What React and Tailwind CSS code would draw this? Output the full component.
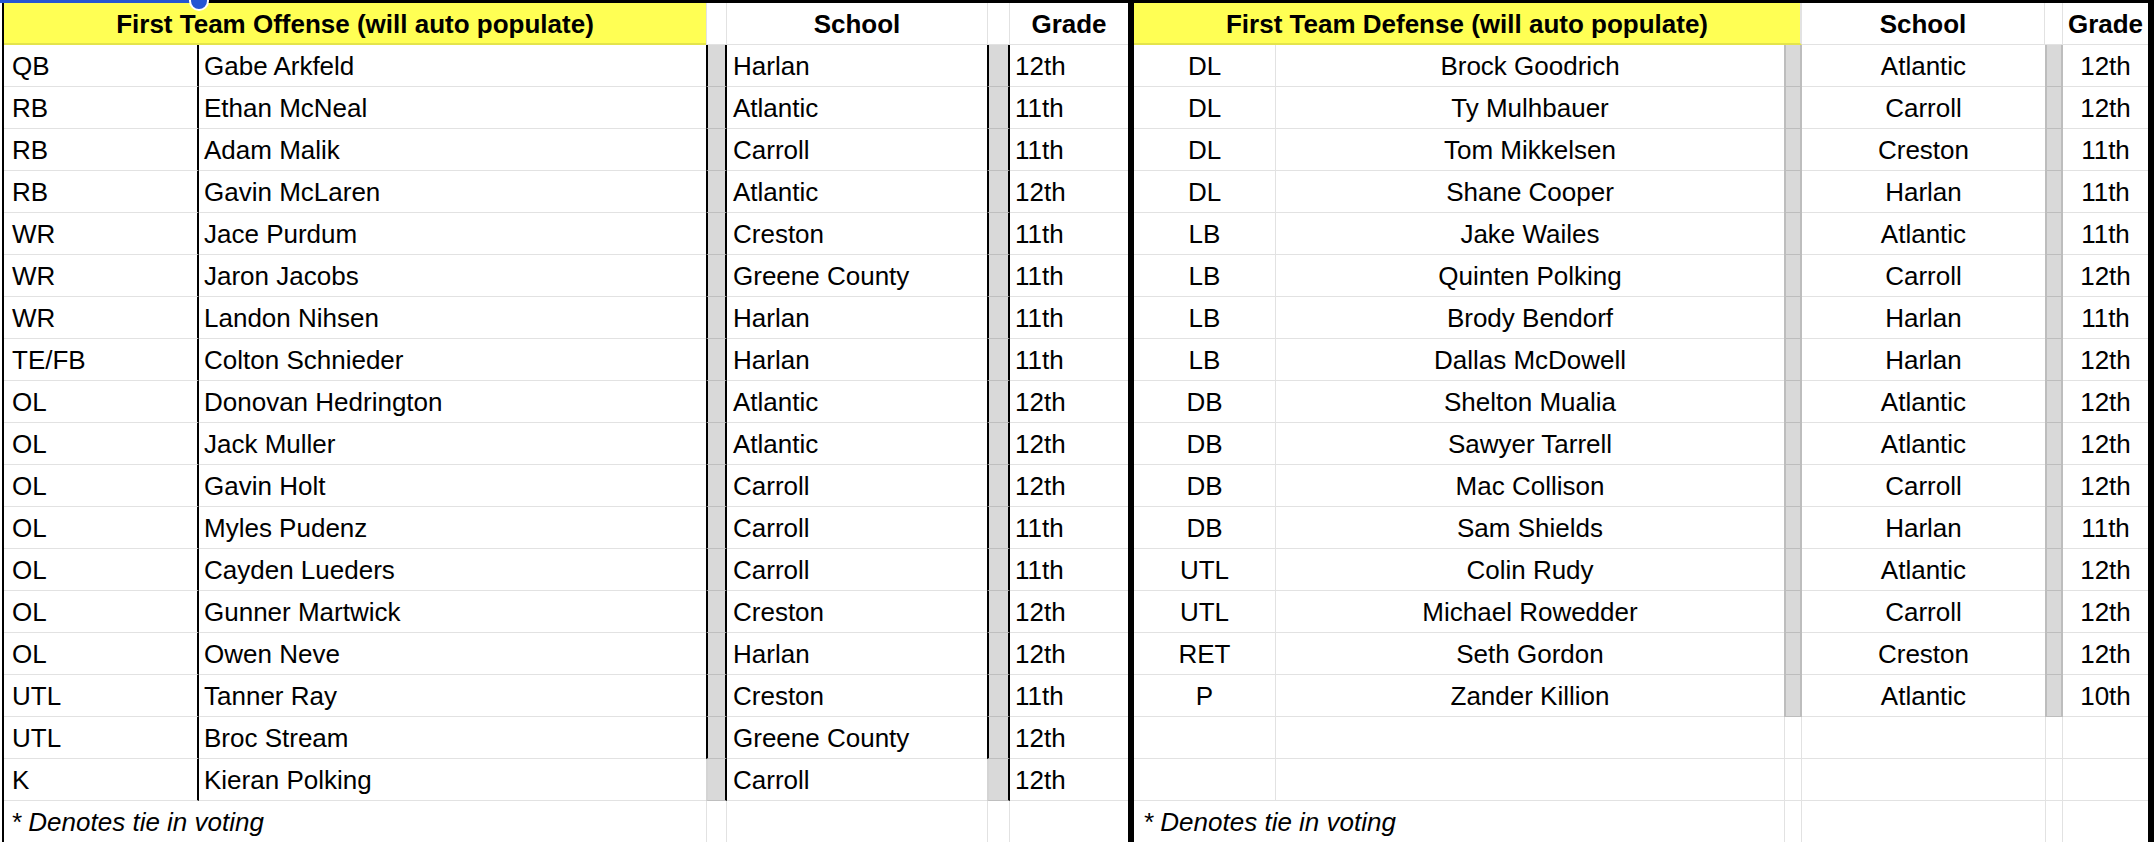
const offense = [
  ["QB", "Gabe Arkfeld", "Harlan", "12th"],
  ["RB", "Ethan McNeal", "Atlantic", "11th"],
  ["RB", "Adam Malik", "Carroll", "11th"],
  ["RB", "Gavin McLaren", "Atlantic", "12th"],
  ["WR", "Jace Purdum", "Creston", "11th"],
  ["WR", "Jaron Jacobs", "Greene County", "11th"],
  ["WR", "Landon Nihsen", "Harlan", "11th"],
  ["TE/FB", "Colton Schnieder", "Harlan", "11th"],
  ["OL", "Donovan Hedrington", "Atlantic", "12th"],
  ["OL", "Jack Muller", "Atlantic", "12th"],
  ["OL", "Gavin Holt", "Carroll", "12th"],
  ["OL", "Myles Pudenz", "Carroll", "11th"],
  ["OL", "Cayden Lueders", "Carroll", "11th"],
  ["OL", "Gunner Martwick", "Creston", "12th"],
  ["OL", "Owen Neve", "Harlan", "12th"],
  ["UTL", "Tanner Ray", "Creston", "11th"],
  ["UTL", "Broc Stream", "Greene County", "12th"],
  ["K", "Kieran Polking", "Carroll", "12th"],
];

const defense = [
  ["DL", "Brock Goodrich", "Atlantic", "12th"],
  ["DL", "Ty Mulhbauer", "Carroll", "12th"],
  ["DL", "Tom Mikkelsen", "Creston", "11th"],
  ["DL", "Shane Cooper", "Harlan", "11th"],
  ["LB", "Jake Wailes", "Atlantic", "11th"],
  ["LB", "Quinten Polking", "Carroll", "12th"],
  ["LB", "Brody Bendorf", "Harlan", "11th"],
  ["LB", "Dallas McDowell", "Harlan", "12th"],
  ["DB", "Shelton Mualia", "Atlantic", "12th"],
  ["DB", "Sawyer Tarrell", "Atlantic", "12th"],
  ["DB", "Mac Collison", "Carroll", "12th"],
  ["DB", "Sam Shields", "Harlan", "11th"],
  ["UTL", "Colin Rudy", "Atlantic", "12th"],
  ["UTL", "Michael Rowedder", "Carroll", "12th"],
  ["RET", "Seth Gordon", "Creston", "12th"],
  ["P", "Zander Killion", "Atlantic", "10th"],
];

const OffenseRow = ({ r, last }) => {
  const strip = last
    ? "bg-[#d9d9d9] border-l-2 border-r-2 border-l-[#d4d4d4] border-r-black border-b border-b-[#bfbfbf]"
    : "bg-[#d9d9d9] border-l-2 border-r-2 border-l-black border-r-black border-b border-b-[#bfbfbf]";
  return (
    <div className="flex h-[42px]">
      <div className="w-[195px] flex items-center pt-[2px] pl-[8px] border-r-2 border-r-black border-b border-b-[#e2e2e2]">{r[0]}</div>
      <div className="w-[507px] flex items-center pt-[2px] pl-[5px] border-b border-b-[#e2e2e2]">{r[1]}</div>
      <div className={"w-[21px] " + strip} />
      <div className="w-[260px] flex items-center pt-[2px] pl-[6px] border-b border-b-[#e2e2e2]">{r[2]}</div>
      <div className={"w-[23px] " + strip} />
      <div className="w-[118px] flex items-center pt-[2px] pl-[5px] border-b border-b-[#e2e2e2]">{r[3]}</div>
    </div>
  );
};

const DefenseRow = ({ r }) => {
  if (!r) {
    return (
      <div className="flex h-[42px]">
        <div className="w-[142px] border-r border-r-[#e2e2e2] border-b border-b-[#e2e2e2]" />
        <div className="w-[508px] border-b border-b-[#e2e2e2]" />
        <div className="w-[18px] border-l border-r border-l-[#e2e2e2] border-r-[#e2e2e2] border-b border-b-[#e2e2e2]" />
        <div className="w-[243px] border-b border-b-[#e2e2e2]" />
        <div className="w-[18px] border-l border-r border-l-[#e2e2e2] border-r-[#e2e2e2] border-b border-b-[#e2e2e2]" />
        <div className="w-[85px] border-b border-b-[#e2e2e2]" />
      </div>
    );
  }
  return (
    <div className="flex h-[42px]">
      <div className="w-[142px] flex items-center justify-center pt-[2px] border-r border-r-[#e2e2e2] border-b border-b-[#e2e2e2]">{r[0]}</div>
      <div className="w-[508px] flex items-center justify-center pt-[2px] border-b border-b-[#e2e2e2]">{r[1]}</div>
      <div className="w-[18px] bg-[#d9d9d9] border-l-2 border-r-2 border-l-[#bdbdbd] border-r-[#bdbdbd] border-b border-b-[#bdbdbd]" />
      <div className="w-[243px] flex items-center justify-center pt-[2px] border-b border-b-[#e2e2e2]">{r[2]}</div>
      <div className="w-[18px] bg-[#d9d9d9] border-l-2 border-r-2 border-l-[#bdbdbd] border-r-[#bdbdbd] border-b border-b-[#bdbdbd]" />
      <div className="w-[85px] flex items-center justify-center pt-[2px] border-b border-b-[#e2e2e2]">{r[3]}</div>
    </div>
  );
};

export default function App() {
  const defRows = [...defense, null, null];
  return (
    <div className="relative w-[2154px] h-[842px] overflow-hidden bg-white text-black text-[26px] font-['Liberation_Sans',Arial,sans-serif]">
      <div className="h-[3px] bg-black" />
      <div className="flex">
        <div className="pl-[2px]">
          <div className="border-l-2 border-l-black">
            <div className="flex h-[42px]">
              <div className="w-[702px] flex items-center justify-center pt-[2px] bg-[#ffff54] border-b-2 border-b-[#e4e44c] font-bold">
                First Team Offense (will auto populate)
              </div>
              <div className="w-[21px] border-l border-r border-l-[#e2e2e2] border-r-[#e2e2e2] border-b border-b-[#e2e2e2]" />
              <div className="w-[260px] flex items-center justify-center pt-[2px] border-b border-b-[#e2e2e2] font-bold">School</div>
              <div className="w-[23px] border-l border-r border-l-[#e2e2e2] border-r-[#e2e2e2] border-b border-b-[#e2e2e2]" />
              <div className="w-[118px] flex items-center justify-center pt-[2px] border-b border-b-[#e2e2e2] font-bold">Grade</div>
            </div>
            {offense.map((r, i) => (
              <OffenseRow key={i} r={r} last={i === offense.length - 1} />
            ))}
            <div className="flex h-[41px]">
              <div className="w-[702px] flex items-center pt-[2px] pl-[7px] italic">* Denotes tie in voting</div>
              <div className="w-[21px] border-l border-r border-l-[#e2e2e2] border-r-[#e2e2e2]" />
              <div className="w-[260px]" />
              <div className="w-[23px] border-l border-r border-l-[#e2e2e2] border-r-[#e2e2e2]" />
              <div className="w-[118px]" />
            </div>
          </div>
        </div>
        <div className="w-[6px] bg-black" />
        <div className="w-[1014px]">
          <div className="flex h-[42px]">
            <div className="w-[668px] flex items-center justify-center pt-[2px] bg-[#ffff54] border-r-2 border-r-[#e2e2e2] border-b-2 border-b-[#e4e44c] font-bold">
              First Team Defense (will auto populate)
            </div>
            <div className="w-[243px] flex items-center justify-center pt-[2px] border-r border-r-[#e2e2e2] border-b border-b-[#e2e2e2] font-bold">School</div>
            <div className="w-[18px] border-r border-r-[#e2e2e2] border-b border-b-[#e2e2e2]" />
            <div className="w-[85px] flex items-center justify-center pt-[2px] border-b border-b-[#e2e2e2] font-bold whitespace-nowrap">Grade</div>
          </div>
          {defRows.map((r, i) => (
            <DefenseRow key={i} r={r} />
          ))}
          <div className="flex h-[41px]">
            <div className="w-[650px] flex items-center pt-[2px] pl-[9px] italic">* Denotes tie in voting</div>
            <div className="w-[18px] border-l border-r border-l-[#e2e2e2] border-r-[#e2e2e2]" />
            <div className="w-[243px]" />
            <div className="w-[18px] border-l border-r border-l-[#e2e2e2] border-r-[#e2e2e2]" />
            <div className="w-[85px]" />
          </div>
        </div>
        <div className="w-[6px] bg-black" />
      </div>
      <div className="absolute top-0 left-0 w-[192px] h-[3px] bg-[#2456d3]" />
      <div className="absolute top-[-9px] left-[189px] w-[20px] h-[20px] rounded-full bg-[#2456d3] border-2 border-white" />
    </div>
  );
}
